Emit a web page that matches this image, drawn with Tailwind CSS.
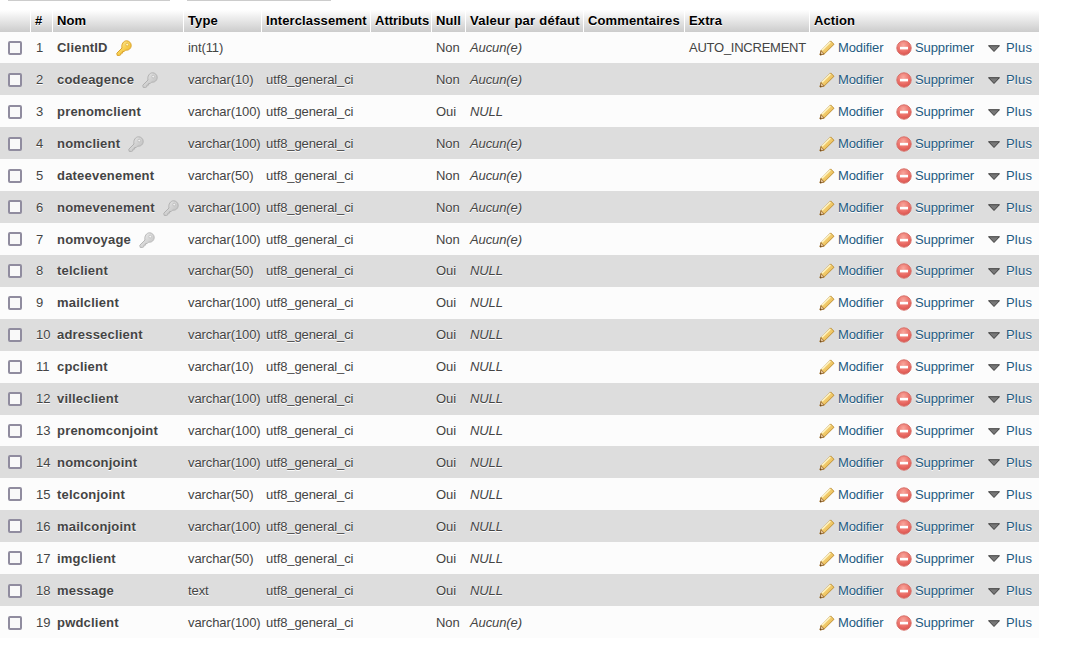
<!DOCTYPE html>
<html lang="fr">
  <head>
    <meta charset="UTF-8" />
    <meta name="viewport" content="width=device-width, initial-scale=1" />
    <title>Structure de la table client</title>
    <script src="https://cdn.jsdelivr.net/npm/@tailwindcss/browser@4"></script>
  </head>

  <body class="bg-white font-['Liberation_Sans',Arial,sans-serif] text-[13px] text-[#444] overflow-hidden">
    <!-- shared icons -->
    <svg class="absolute w-0 h-0" xmlns="http://www.w3.org/2000/svg">
      <defs>
        <linearGradient id="keyFill" x1="0" y1="0" x2="1" y2="1">
          <stop offset="0" stop-color="#fff3a8" />
          <stop offset="0.6" stop-color="#f6c944" />
          <stop offset="1" stop-color="#e8a52a" />
        </linearGradient>
        <linearGradient id="pencilFill" x1="0" y1="0" x2="1" y2="1">
          <stop offset="0" stop-color="#fdeb9c" />
          <stop offset="1" stop-color="#e5a93a" />
        </linearGradient>
        <radialGradient id="stopFill" cx="0.45" cy="0.3" r="0.8">
          <stop offset="0" stop-color="#f8a79d" />
          <stop offset="0.6" stop-color="#ea6a63" />
          <stop offset="1" stop-color="#d04a46" />
        </radialGradient>
      </defs>
      <symbol id="key" viewBox="0 0 16 16">
        <path
          d="M10.5 .8a4.7 4.7 0 0 1 4.7 4.7c0 2.9-2.6 5.2-5.6 4.6L8.2 11.5H6.6v1.6H5v1.4L3.6 15.4H1.2L.8 13.2 6 8c-.9-3.5 1.4-7.2 4.5-7.2z"
          fill="url(#keyFill)"
          stroke="#d9a22c"
        />
        <circle cx="11.2" cy="4.6" r="1.4" fill="#fff6c4" stroke="#dfae3c" stroke-width=".8" />
      </symbol>
      <symbol id="pencil" viewBox="0 0 16 16">
        <path d="M11.6 .9 15 4.3 5.2 14 1 15l1-4.3z" fill="url(#pencilFill)" stroke="#b98a2c" stroke-width=".9" stroke-linejoin="round" />
        <path d="M3 10.2 11.4 2" stroke="#fff6c8" stroke-width="1.3" />
        <path d="M2 10.7 5.2 14 1 15z" fill="#e8c9a0" stroke="#8a5a24" stroke-width=".7" stroke-linejoin="round" />
        <path d="M1.4 13.2 2.7 14.5 1 15z" fill="#5a3a1a" />
      </symbol>
      <symbol id="stop" viewBox="0 0 16 16">
        <circle cx="8" cy="8" r="7.2" fill="url(#stopFill)" stroke="#d8736c" />
        <rect x="4" y="6.8" width="8" height="2.6" fill="#fff" />
      </symbol>
      <symbol id="caret" viewBox="0 0 12 7">
        <path d="M.5 .7h11L6 6.5z" fill="#777" stroke="#333" stroke-width=".9" stroke-linejoin="round" />
      </symbol>
    </svg>

    <!-- bits of the buttons above the table, scrolled nearly out of view -->
    <div class="flex h-[10px] pl-2 gap-[17px] items-start">
      <div class="w-[162px] h-px bg-[#ccc]"></div>
      <div class="w-[144px] h-px bg-[#ccc]"></div>
    </div>

    <div class="w-[1039px]">
      <!-- header -->
      <div
        class="grid grid-cols-[31px_22px_131px_78px_109px_61px_34px_118px_101px_125px_229px] h-[22px] items-center font-bold text-black tracking-[0.12px] [text-shadow:0_1px_0_#fff] bg-linear-to-b from-white to-[#ccc]"
      >
        <div class="h-full"></div>
        <div class="h-full leading-[22px] pl-1 border-l border-white -ml-px">#</div>
        <div class="h-full leading-[22px] pl-1 border-l border-white -ml-px">Nom</div>
        <div class="h-full leading-[22px] pl-1 border-l border-white -ml-px">Type</div>
        <div class="h-full leading-[22px] pl-1 border-l border-white -ml-px">Interclassement</div>
        <div class="h-full leading-[22px] pl-1 border-l border-white -ml-px tracking-normal">Attributs</div>
        <div class="h-full leading-[22px] pl-1 border-l border-white -ml-px">Null</div>
        <div class="h-full leading-[22px] pl-1 border-l border-white -ml-px whitespace-nowrap tracking-[0.25px]">Valeur par défaut</div>
        <div class="h-full leading-[22px] pl-1 border-l border-white -ml-px">Commentaires</div>
        <div class="h-full leading-[22px] pl-1 border-l border-white -ml-px">Extra</div>
        <div class="h-full leading-[22px] pl-1 border-l border-white -ml-px">Action</div>
      </div>

      <div id="rows"></div>
    </div>

    <script>
      // nom, type, interclassement, null, index
      const columns = [
        ["ClientID", "int(11)", "", "Non", "primary"],
        ["codeagence", "varchar(10)", "utf8_general_ci", "Non", "index"],
        ["prenomclient", "varchar(100)", "utf8_general_ci", "Oui", ""],
        ["nomclient", "varchar(100)", "utf8_general_ci", "Non", "index"],
        ["dateevenement", "varchar(50)", "utf8_general_ci", "Non", ""],
        ["nomevenement", "varchar(100)", "utf8_general_ci", "Non", "index"],
        ["nomvoyage", "varchar(100)", "utf8_general_ci", "Non", "index"],
        ["telclient", "varchar(50)", "utf8_general_ci", "Oui", ""],
        ["mailclient", "varchar(100)", "utf8_general_ci", "Oui", ""],
        ["adresseclient", "varchar(100)", "utf8_general_ci", "Oui", ""],
        ["cpclient", "varchar(10)", "utf8_general_ci", "Oui", ""],
        ["villeclient", "varchar(100)", "utf8_general_ci", "Oui", ""],
        ["prenomconjoint", "varchar(100)", "utf8_general_ci", "Oui", ""],
        ["nomconjoint", "varchar(100)", "utf8_general_ci", "Oui", ""],
        ["telconjoint", "varchar(50)", "utf8_general_ci", "Oui", ""],
        ["mailconjoint", "varchar(100)", "utf8_general_ci", "Oui", ""],
        ["imgclient", "varchar(50)", "utf8_general_ci", "Oui", ""],
        ["message", "text", "utf8_general_ci", "Oui", ""],
        ["pwdclient", "varchar(100)", "utf8_general_ci", "Non", ""],
      ];

      const keyIcon = (kind) => {
        if (!kind) return "";
        const cls = kind === "primary" ? "" : "grayscale opacity-80";
        return `<svg class="w-4 h-4 ml-2 mt-px shrink-0 ${cls}"><use href="#key" /></svg>`;
      };

      document.getElementById("rows").innerHTML = columns
        .map(([name, type, coll, isNull, index], i) => {
          const bg = i % 2 ? "bg-[#ddd]" : "bg-[#fcfcfc]";
          const height = i === 0 ? "h-[31.24px]" : "h-[31.94px]";
          // rows sit on fractional offsets, these ones round a pixel too high
          const nudge = (i >= 1 && i <= 6) || i >= 17 ? "pt-px" : "";
          const fallback = isNull === "Oui" ? "NULL" : "Aucun(e)";
          return `
          <div class="grid grid-cols-[31px_22px_131px_78px_109px_61px_34px_118px_101px_125px_229px] items-center tracking-[-0.1px] [text-shadow:0_1px_0_#fff] ${height} ${bg} ${nudge}">
            <div class="pl-2 flex"><input type="checkbox" class="appearance-none w-[14px] h-[14px] border-2 border-[#908c9f] rounded-[2px] bg-[#f9f9f9]" /></div>
            <div class="pl-[5px]">${i + 1}</div>
            <div class="pl-1 font-bold tracking-[0.2px] flex items-center whitespace-nowrap">${name}${keyIcon(index)}</div>
            <div class="pl-1">${type}</div>
            <div class="pl-1">${coll}</div>
            <div></div>
            <div class="pl-1">${isNull}</div>
            <div class="pl-1 italic">${fallback}</div>
            <div></div>
            <div class="pl-1 whitespace-nowrap tracking-[-0.25px]">${i === 0 ? "AUTO_INCREMENT" : ""}</div>
            <div class="grid grid-cols-[77px_92px_1fr] pl-[9px] text-[#235a81]">
              <a href="#" class="flex items-center gap-[3px]"><svg class="w-4 h-4 shrink-0 mt-px"><use href="#pencil" /></svg>Modifier</a>
              <a href="#" class="flex items-center gap-[3px]"><svg class="w-4 h-4 shrink-0 mt-px"><use href="#stop" /></svg>Supprimer</a>
              <a href="#" class="flex items-center gap-[6px] tracking-[0.2px]"><svg class="w-3 h-[7px] shrink-0 mt-px"><use href="#caret" /></svg>Plus</a>
            </div>
          </div>`;
        })
        .join("");
    </script>
  </body>
</html>
